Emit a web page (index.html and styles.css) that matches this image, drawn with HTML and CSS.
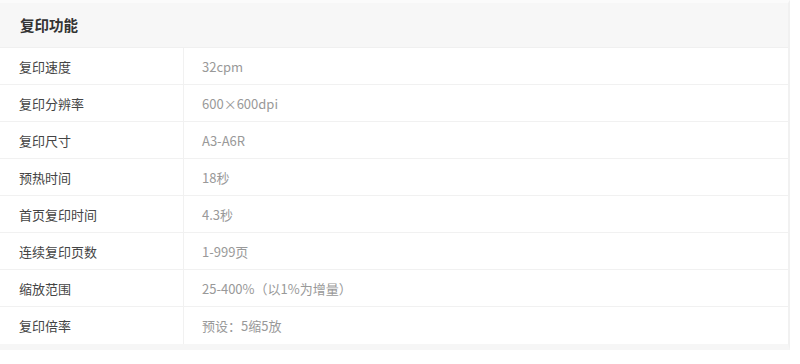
FILE: index.html
```html
<!DOCTYPE html>
<html lang="zh-CN">
<head>
<meta charset="utf-8">
<title>复印功能</title>
<link rel="stylesheet" href="styles.css">
</head>
<body>
<div class="spec">
  <div class="spec-head">复印功能</div>
  <div class="spec-row"><div class="spec-key">复印速度</div><div class="spec-val">32cpm</div></div>
  <div class="spec-row"><div class="spec-key">复印分辨率</div><div class="spec-val">600×600dpi</div></div>
  <div class="spec-row"><div class="spec-key">复印尺寸</div><div class="spec-val">A3-A6R</div></div>
  <div class="spec-row"><div class="spec-key">预热时间</div><div class="spec-val">18秒</div></div>
  <div class="spec-row"><div class="spec-key">首页复印时间</div><div class="spec-val">4.3秒</div></div>
  <div class="spec-row"><div class="spec-key">连续复印页数</div><div class="spec-val">1-999页</div></div>
  <div class="spec-row"><div class="spec-key">缩放范围</div><div class="spec-val">25-400%（以1%为增量）</div></div>
  <div class="spec-row"><div class="spec-key">复印倍率</div><div class="spec-val">预设：5缩5放</div></div>
</div>
</body>
</html>
```

FILE: styles.css
```css
html, body {
  margin: 0;
  padding: 0;
  background: #ffffff;
}
body {
  font-family: "Noto Sans CJK SC", "Noto Sans", sans-serif;
}
.spec {
  width: 788px;
  border-right: 2px solid #f1f1f1;
  border-bottom: 6px solid #f6f6f6;
  border-top: 3px solid #fbfbfb;
}
.spec-head {
  height: 44px;
  line-height: 44px;
  background: #f7f7f7;
  padding-left: 20px;
  font-size: 14.5px;
  font-weight: bold;
  color: #333;
  border-bottom: 1px solid #f0f0f0;
}
.spec-row {
  display: flex;
  height: 36px;
  border-bottom: 1px solid #f1f1f1;
}
.spec-row:last-child {
  border-bottom: none;
  height: 37px;
}
.spec-key {
  width: 164px;
  padding-left: 19px;
  border-right: 1px solid #f1f1f1;
  display: flex;
  align-items: center;
  font-size: 13px;
  color: #444;
}
.spec-val {
  padding-left: 18px;
  display: flex;
  align-items: center;
  font-size: 13px;
  color: #999;
}
```
